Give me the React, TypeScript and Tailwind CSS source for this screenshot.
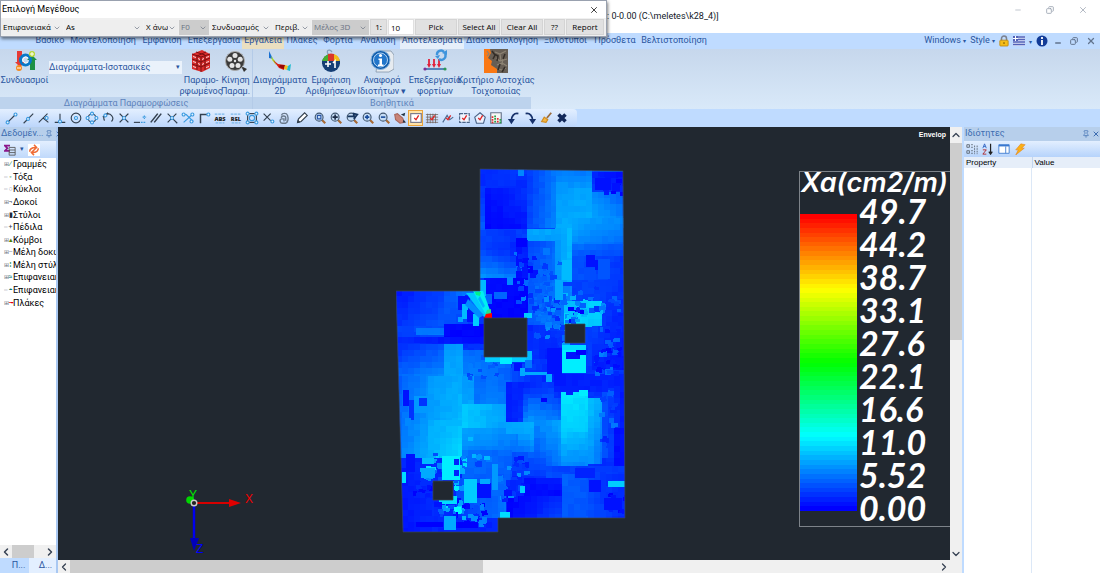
import type { ReactNode } from "react";
import { clsx } from "clsx";
import { ChevronDown, ChevronLeft, ChevronRight, ChevronUp, Copy, Minus, Pin, X } from "lucide-react";

const TABS = [
  { label: "Βασικό", width: "w-9" },
  { label: "Μοντελοποίηση", width: "w-[70px]" },
  { label: "Εμφάνιση", width: "w-12" },
  { label: "Επεξεργασία", width: "w-14" },
  { label: "Εργαλεία", width: "w-[42px]", hot: true },
  { label: "Πλάκες", width: "w-9" },
  { label: "Φορτία", width: "w-9" },
  { label: "Ανάλυση", width: "w-11" },
  { label: "Αποτελέσματα", width: "w-16", active: true },
  { label: "Διαστασιολόγηση", width: "w-[76px]" },
  { label: "Ξυλότυποι", width: "w-[51px]" },
  { label: "Πρόσθετα", width: "w-12" },
  { label: "Βελτιστοποίηση", width: "w-[70px]" },
];

const TREE = [
  { label: "Γραμμές", mark: "∕", color: "text-green-700", open: true },
  { label: "Τόξα", mark: "◦", color: "text-green-700" },
  { label: "Κύκλοι", mark: "○", color: "text-gray-400" },
  { label: "Δοκοί", mark: "¬", color: "text-gray-700", open: true },
  { label: "Στύλοι", mark: "▮", color: "text-gray-800", open: true },
  { label: "Πέδιλα", mark: "+", color: "text-gray-700" },
  { label: "Κόμβοι", mark: "▴", color: "text-lime-700", open: true },
  { label: "Μέλη δοκών", mark: "–", color: "text-gray-400", open: true },
  { label: "Μέλη στύλων", mark: "⁞", color: "text-green-700", open: true },
  { label: "Επιφανειακά", mark: "≈", color: "text-teal-700", open: true },
  { label: "Επιφανειακά", mark: "◓", color: "text-teal-700" },
  { label: "Πλάκες", mark: "╼", color: "text-red-600", open: true },
];

const LEGEND = ["49.7", "44.2", "38.7", "33.1", "27.6", "22.1", "16.6", "11.0", "5.52", "0.00"];
const BANDS = 64;

// Shaded areas of the slab: x, y, width, height, then the level at the
// top-left, top-right, bottom-left and bottom-right corner.
const AREAS = [
  [0, 0, 232, 366, 3, 5, 2, 2],
  [84, 0, 47, 20, 2, 4, 3, 2], [84, 6, 5, 56, 2, 2, 6, 5], [89, 20, 42, 41, 1, 3, 0, 1],
  [131, 2, 29, 58, 3, 7, 4, 8], [160, 2, 36, 18, 7, 7, 9, 9], [160, 20, 36, 41, 9, 10, 10, 10],
  [196, 4, 34, 20, 2, 0, 4, 2], [196, 24, 34, 36, 8, 5, 10, 8], [176, 50, 54, 28, 10, 8, 8, 6],
  [176, 76, 54, 12, 7, 5, 5, 4], [131, 61, 28, 12, 10, 10, 9, 9], [159, 60, 17, 54, 9, 11, 8, 11],
  [176, 88, 54, 24, 5, 3, 5, 3], [84, 62, 36, 20, 4, 3, 4, 2], [84, 82, 36, 28, 4, 2, 9, 7],
  [120, 72, 12, 40, 1, 2, 0, 2], [132, 73, 27, 52, 4, 6, 5, 7], [88, 110, 44, 40, 1, 0, 0, 0],
  [132, 118, 44, 40, 5, 8, 5, 7], [204, 112, 26, 58, 4, 3, 3, 1], [168, 133, 38, 26, 10, 13, 14, 11],
  [131, 157, 39, 34, 2, 4, 3, 1], [196, 158, 34, 44, 4, 2, 2, 1],
  [0, 122, 48, 36, 1, 4, 3, 5], [48, 122, 36, 36, 5, 8, 5, 3], [0, 158, 48, 16, 4, 5, 3, 4],
  [20, 160, 28, 7, 7, 7, 7, 7], [48, 156, 40, 13, 1, 0, 0, 0], [0, 169, 88, 7, 2, 0, 3, 1],
  [0, 176, 48, 32, 2, 5, 6, 8], [48, 176, 19, 32, 9, 9, 10, 10], [67, 182, 48, 28, 6, 7, 8, 6],
  [0, 208, 32, 82, 5, 8, 7, 10], [32, 208, 34, 44, 9, 10, 9, 11], [32, 252, 34, 38, 10, 11, 10, 13],
  [66, 208, 12, 45, 9, 9, 10, 10], [78, 208, 12, 30, 6, 6, 7, 7], [90, 200, 26, 40, 7, 5, 8, 7],
  [66, 236, 50, 24, 12, 9, 12, 9], [66, 260, 60, 34, 10, 8, 7, 6], [116, 196, 50, 18, 5, 2, 4, 1],
  [116, 214, 42, 40, 1, 3, 8, 8], [110, 214, 17, 40, 2, 2, 1, 3], [132, 230, 34, 24, 6, 4, 9, 7],
  [110, 254, 30, 12, 10, 10, 10, 10], [122, 266, 18, 18, 9, 10, 6, 8], [138, 252, 28, 50, 8, 10, 4, 7],
  [158, 206, 72, 18, 1, 2, 2, 2], [165, 224, 27, 40, 14, 13, 12, 12], [165, 264, 27, 34, 12, 11, 8, 8],
  [192, 230, 14, 66, 12, 10, 9, 6], [206, 224, 24, 66, 5, 1, 5, 1], [218, 260, 12, 50, 1, 1, 0, 1],
  [114, 284, 36, 28, 5, 6, 2, 3], [150, 298, 80, 14, 4, 3, 5, 3], [166, 306, 26, 44, 6, 5, 5, 5],
  [192, 306, 38, 44, 4, 2, 5, 2], [128, 310, 38, 22, 1, 2, 0, 0], [111, 328, 55, 22, 0, 2, 0, 4],
  [0, 300, 38, 66, 1, 3, 1, 2], [66, 282, 50, 30, 7, 6, 6, 5], [60, 310, 50, 40, 5, 6, 3, 7],
];

// Single mesh pieces: x, y, width, height, level
const PATCHES = [
  [122, 1, 6, 7, 8], [199, 10, 16, 12, 1], [216, 15, 8, 8, 1], [120, 70, 11, 9, 0], [147, 80, 7, 7, 7],
  [190, 87, 9, 12, 1], [199, 92, 4, 10, 1], [202, 91, 12, 20, 5], [166, 92, 10, 20, 11], [159, 112, 8, 20, 10],
  [98, 124, 13, 7, 6], [88, 126, 8, 10, 6], [111, 109, 6, 8, 8], [84, 112, 6, 16, 11], [128, 145, 8, 5, 12],
  [62, 128, 12, 14, 1], [66, 136, 6, 15, 11], [71, 142, 12, 12, 1], [77, 146, 6, 12, 12],
  [89, 189, 42, 5, 12], [104, 189, 12, 7, 14], [130, 183, 6, 11, 11], [118, 195, 8, 8, 1], [124, 200, 5, 8, 10],
  [129, 192, 7, 8, 7], [128, 204, 28, 3, 10], [150, 205, 6, 9, 10], [151, 180, 15, 26, 1],
  [166, 177, 24, 5, 13], [166, 182, 24, 23, 14], [170, 184, 14, 7, 1], [180, 182, 10, 5, 0],
  [18, 228, 14, 17, 9], [23, 230, 8, 8, 3], [7, 222, 6, 16, 1], [13, 232, 5, 20, 3], [9, 250, 6, 8, 8],
  [145, 230, 6, 4, 0], [183, 222, 9, 6, 14], [170, 224, 7, 3, 2],
  [10, 286, 9, 18, 1], [6, 304, 4, 11, 13], [46, 288, 18, 24, 14], [58, 291, 5, 6, 2], [58, 302, 5, 6, 2],
  [26, 290, 12, 6, 11], [25, 300, 14, 10, 10], [68, 311, 13, 24, 12], [81, 315, 14, 15, 1], [84, 311, 10, 5, 10],
  [96, 296, 6, 26, 9], [104, 344, 10, 6, 13], [108, 322, 8, 6, 1], [124, 318, 5, 7, 12], [212, 313, 18, 6, 12],
  [193, 312, 12, 12, 1], [179, 300, 20, 10, 2], [43, 328, 18, 8, 13], [38, 334, 8, 5, 1], [48, 348, 12, 14, 10],
  [20, 354, 27, 5, 0], [62, 354, 20, 6, 0], [208, 330, 18, 12, 1], [72, 269, 5, 4, 11], [88, 288, 6, 4, 11],
];

// Irregular regions: x, y, width, height, base level, spread, number of pieces
const BROKEN = [
  [118, 82, 22, 46, 3, 4, 20], [136, 90, 30, 50, 5, 2, 26], [120, 125, 40, 24, 6, 4, 22],
  [156, 118, 50, 24, 7, 5, 26], [138, 146, 34, 22, 6, 3, 20], [196, 158, 26, 46, 4, 4, 34],
  [160, 172, 10, 12, 8, 6, 8], [170, 138, 16, 14, 5, 7, 16], [206, 128, 16, 18, 4, 2, 8],
  [22, 284, 24, 26, 9, 5, 16], [56, 288, 14, 34, 10, 5, 14], [14, 310, 26, 16, 1, 2, 12],
  [54, 330, 32, 26, 4, 7, 34], [40, 334, 22, 12, 9, 6, 12], [100, 284, 30, 46, 5, 4, 22],
  [202, 8, 24, 16, 1, 2, 10], [208, 324, 22, 24, 1, 2, 12], [70, 184, 30, 26, 6, 2, 14],
  [70, 284, 22, 10, 7, 4, 8], [200, 218, 18, 60, 5, 3, 14], [60, 126, 14, 24, 6, 5, 8],
];

const blue = (level: number) => {
  const g = Math.round(Math.max(0, Math.min(15, level)) * 17);
  return `rgb(0,${g},255)`;
};

const hash = (a: number, b: number) => {
  const v = Math.sin(a * 127.1 + b * 311.7) * 43758.5453;
  return v - Math.floor(v);
};

function Mesh() {
  const cells: ReactNode[] = [];
  AREAS.forEach(([x, y, w, h, tl, tr, bl, br], n) => {
    for (let dx = 0; dx < w; dx += 6) {
      for (let dy = 0; dy < h; dy += 6) {
        const u = Math.min(1, (dx + 3) / w);
        const v = Math.min(1, (dy + 3) / h);
        const level = (tl * (1 - u) + tr * u) * (1 - v) + (bl * (1 - u) + br * u) * v;
        cells.push(
          <rect
            key={`a${n}-${dx}-${dy}`}
            x={x + dx}
            y={y + dy}
            width={Math.min(6, w - dx)}
            height={Math.min(6, h - dy)}
            fill={blue(level + (hash(x + dx, y + dy) - 0.5) * 0.7)}
          />,
        );
      }
    }
  });
  BROKEN.forEach(([x, y, w, h, base, spread, count], n) => {
    for (let k = 0; k < count; k++) {
      const px = x + hash(n, k) * w;
      const py = y + hash(n + 40, k) * h;
      const level = base + (hash(n + 80, k) * 2 - 1) * spread;
      cells.push(
        <rect
          key={`b${n}-${k}`}
          x={px}
          y={py}
          width={3 + hash(k, n) * 4}
          height={3 + hash(k, n + 9) * 3}
          fill={blue(level)}
          transform={`rotate(${hash(k, n + 3) * 24 - 12} ${px} ${py})`}
        />,
      );
    }
  });
  PATCHES.forEach(([x, y, w, h, level], n) => {
    cells.push(<rect key={`p${n}`} x={x} y={y} width={w} height={h} fill={blue(level)} />);
  });
  return (
    <svg viewBox="0 0 232 366" className="absolute left-[338px] top-[41px] h-[366px] w-[232px]" role="img" aria-label="Xa">
      <clipPath id="slab">
        <path d="M84 1 227 3 229 350H102V364H7L0 123H84Z" />
      </clipPath>
      <g clipPath="url(#slab)">
        <g shapeRendering="crispEdges">{cells}</g>
        <path d="M70 125h12l12 22-6 2z" fill="#00c8ff" />
        <path d="M77 123h10l8 22-5 2z" fill="#00f0f0" />
        <path d="m72 131 16 16-5 3-14-13z" fill="#008cff" />
        <path d="M79 124h6l-1 4-4-1z" fill="#00f08c" />
        <path d="m84 128 5 10-2 2-5-9z" fill="#00b4ff" />
        <path d="m91 142 4-1v6h-6z" fill="#20e08c" />
        <path d="m88 150 2-4 6-1v5z" fill="#f00" />
      </g>
      <g fill="#212830" stroke="#3a4654" strokeWidth=".7">
        <path d="M88 150h43v39H88zM169 156h20v19h-20zM37 313h20v19H37z" />
        <path d="M84 1 227 3 229 350H102V364H7L0 123H84Z" fill="none" />
      </g>
    </svg>
  );
}

function Axes() {
  return (
    <svg viewBox="0 0 80 70" className="absolute left-[126px] top-[359px] h-[70px] w-20">
      <path d="M11 17h36" stroke="#d60000" strokeWidth="2" />
      <path d="m45 13 12 4-12 4z" fill="#e00000" />
      <path d="M10 19v38" stroke="#0000f0" strokeWidth="2.4" />
      <path d="m6 52 4 13 5-13z" fill="#0000b8" />
      <circle cx="6" cy="14" r="3.8" fill="#00d600" />
      <circle cx="10" cy="17" r="2.8" fill="#222" stroke="#ccc" strokeWidth="1.4" />
      <g fontFamily="Liberation Sans, sans-serif" fontSize="12">
        <text x="5" y="13" fill="#00e600">Y</text>
        <text x="61" y="17" fill="#f00000">X</text>
        <text x="12" y="67" fill="#0000ff">Z</text>
      </g>
    </svg>
  );
}

function Combo({ label, width, disabled }: { label: string; width: string; disabled?: boolean }) {
  return (
    <div className={clsx("relative h-[15px] shrink-0", width, disabled ? "bg-[#cccccc] text-gray-500" : "bg-[#eeeeee]")}>
      <select disabled={disabled} aria-label={label} className="h-full w-full appearance-none pl-0.5 pr-2.5 opacity-100">
        <option>{label}</option>
      </select>
      <ChevronDown className="pointer-events-none absolute right-0.5 top-1 size-2 text-gray-500" strokeWidth={2} />
    </div>
  );
}

function PushButton({ children, width }: { children: ReactNode; width: string }) {
  return <button className={clsx("h-4 shrink-0 border border-[#d4d4d4] bg-[#e1e1e1] text-center", width)}>{children}</button>;
}

function MagnitudeDialog() {
  return (
    <div className="absolute left-0 top-0 z-10 w-[607px] border border-gray-400 bg-white text-black shadow-[1px_2px_3px_rgba(0,0,0,0.5)]">
      <div className="flex h-[17px] items-center justify-between pl-px pr-[7px]">
        <h2 className="text-[9px]">Επιλογή Μεγέθους</h2>
        <button aria-label="Close"><X className="size-2.5" strokeWidth={1.8} /></button>
      </div>
      <div className="flex h-[18px] items-center gap-px bg-[#f0f0f0] font-['Open_Sans','Noto_Sans',sans-serif] text-[8px] font-medium">
        <Combo label="Επιφανειακά" width="w-[62px]" />
        <Combo label="As" width="w-[79px]" />
        <Combo label="X άνω" width="w-[34px]" />
        <Combo label="F0" width="w-[30px]" disabled />
        <Combo label="Συνδυασμός" width="w-[62px]" />
        <Combo label="Περιβ." width="w-[38px]" />
        <Combo label="Μέλος 3D" width="w-[57px]" disabled />
        <PushButton width="w-[17px]">1:</PushButton>
        <input aria-label="Scale" defaultValue="10" className="h-4 w-[26px] border border-[#e0e0e0] bg-white pl-0.5 leading-3" />
        <PushButton width="w-[42px]">Pick</PushButton>
        <PushButton width="w-[42px]">Select All</PushButton>
        <PushButton width="w-[42px]">Clear All</PushButton>
        <PushButton width="w-[21px]">??</PushButton>
        <PushButton width="w-[38px]">Report</PushButton>
      </div>
    </div>
  );
}

function Large({ lines, width, children }: { lines: string[]; width: string; children: ReactNode }) {
  return (
    <button className={clsx("flex h-12 shrink-0 flex-col items-center whitespace-nowrap text-[9px] leading-[11px]", width)}>
      <svg viewBox="0 0 24 24" className="mb-0.5 size-6 shrink-0">{children}</svg>
      {lines.map((line) => <span key={line}>{line}</span>)}
    </button>
  );
}

function Ribbon() {
  return (
    <div className="flex h-[60px] shrink-0 bg-gradient-to-b from-[#c6d7ec] to-[#d9e9f9] text-[#2a56a0]">
      <section className="flex w-[253px] flex-col border-r border-[#b4cbe8]">
        <div className="flex flex-1 items-start">
          <Large lines={["Συνδυασμοί"]} width="w-[49px]">
            <path d="M4 2h5v11h3l-5 5-5-5h2z" fill="#e63a35" />
            <path d="M17 21h5V11h2l-5-5-5 5h3z" fill="#1d9145" />
            <circle cx="12.5" cy="11" r="5" fill="none" stroke="#0878c8" strokeWidth="3" />
            <path d="M15 9a3 3 0 1 0 0 4" fill="none" stroke="#fff" strokeWidth="1" />
            <circle cx="6" cy="19" r="3" fill="#f68b1f" />
            <path d="M4 19h4" stroke="#fff" />
            <circle cx="19" cy="5" r="3" fill="#b8d832" />
            <path d="M17 5h4M19 3v4" stroke="#fff" />
          </Large>
          <div className="relative mt-3 h-[13px] w-[133px] bg-[#eaf2fb] text-[9px]">
            <select aria-label="Diagram" className="block h-full w-full appearance-none leading-[13px]">
              <option>Διαγράμματα-Ισοτασικές</option>
            </select>
            <span className="pointer-events-none absolute right-0.5 top-px text-[7px]">▾</span>
          </div>
          <Large lines={["Παραμο-", "ρφωμένος"]} width="w-[38px]">
            <path d="m3 5 10-4 8 4v14l-8 4-10-3z" fill="#d92b2b" />
            <path d="m3 5 9 3 9-3M12 8v15M3 10l9 3 9-4M3 15l9 3 9-4M7 3l9 3v15M17 3 8 7v14" fill="none" stroke="#7d1010" strokeWidth="1" />
            <path d="m4 7 3 1v1l-3-1zM9 9l2 1v1l-2-1zM4 12l3 1v1l-3-1zM9 14l2 1v1l-2-1zM4 17l3 1v1l-3-1zM13 10l2-1v1l-2 1zM17 8l3-1v1l-3 1zM13 15l2-1v1l-2 1zM17 13l3-1v1l-3 1zM17 18l3-1v1l-3 1z" fill="#f7d8d8" />
          </Large>
          <Large lines={["Κίνηση", "Παραμ."]} width="w-[31px]">
            <path d="m17 17 6 3-3 3z" fill="#333" />
            <circle cx="11" cy="12" r="9.5" fill="#3b3b3b" stroke="#aaa" />
            <g fill="#e5e5e5">
              <circle cx="11" cy="6.5" r="2.5" /><circle cx="5.8" cy="10.3" r="2.5" /><circle cx="16.2" cy="10.3" r="2.5" />
              <circle cx="8" cy="16.5" r="2.5" /><circle cx="14" cy="16.5" r="2.5" /><circle cx="11" cy="12" r="1.2" />
            </g>
          </Large>
        </div>
        <h3 className="h-3 bg-[#bdd3ed] text-center text-[9px] leading-3 text-[#5d83bc]">Διαγράμματα Παραμορφώσεις</h3>
      </section>
      <section className="flex w-[278px] flex-col">
        <div className="flex flex-1 items-start">
          <Large lines={["Διαγράμματα", "2D"]} width="w-[54px]">
            <path d="m1 2 4 8-4-1z" fill="#176fd1" />
            <path d="m3 7 4 5 1 4-4-5z" fill="#a8d82d" />
            <path d="m5 11 5 4 7 1-1 5-5-2z" fill="#d91c10" />
            <path d="m12 16 5 0-1 4-5-2z" fill="#980805" />
            <path d="m17 16 3 1-1 4-3-1z" fill="#f0c020" />
            <path d="m20 17 3-2-1 7-3-1z" fill="#1fbccf" />
          </Large>
          <Large lines={["Εμφάνιση", "Αριθμήσεων"]} width="w-12">
            <path d="M10 6C6 2 10-1 13 3" fill="none" stroke="#86a0bc" strokeWidth="1.3" />
            <circle cx="12" cy="14" r="9" fill="#153e75" />
            <path d="M12 5a9 9 0 0 0-9 8h9z" fill="#48ae30" />
            <path d="M9 5a9 9 0 0 1 6 0v7H9z" fill="#db3829" />
            <path d="M15 5a9 9 0 0 1 6 8h-6z" fill="#f2bd19" />
            <path d="M3 12h18v3H3z" fill="#153e75" />
            <path d="M6 15h6M9 12v6M14 14l2-2v7" fill="none" stroke="#fff" strokeWidth="1.6" />
          </Large>
          <Large lines={["Αναφορά", "Ιδιοτήτων  ▾"]} width="w-[54px]">
            <path d="M9 2h12l3 4v14l-5 3H6z" fill="#e6ebf0" stroke="#8495a8" strokeWidth=".8" />
            <circle cx="10.500" cy="11" r="9.5" fill="#0f5dad" stroke="#88b3dc" />
            <circle cx="10.500" cy="11" r="7" fill="#2276ca" stroke="#dcedff" strokeWidth=".8" />
            <circle cx="10.500" cy="6.500" r="1.600" fill="#fff" />
            <path d="M8.500 9.500h3.500v6h1.500v1.500H8v-1.500h1.500v-4.500h-1z" fill="#fff" />
          </Large>
          <Large lines={["Επεξεργασία", "φορτίων"]} width="w-[52px]">
            <path d="M1 20h22" stroke="#2f65a8" strokeWidth="1.5" />
            <path d="M6 10v7M11 10v7M16 10v7" stroke="#e2203a" strokeWidth="1.8" />
            <path d="m4 15 2 4 2-4zM9 15l2 4 2-4zM14 15l2 4 2-4z" fill="#e2203a" />
            <circle cx="2" cy="20" r="1.600" fill="#7b2f97" /><circle cx="22" cy="20" r="1.600" fill="#2b9957" />
            <path d="M14 6a4 4 0 0 1 7-3M22 5a4 4 0 0 1-6 5" fill="none" stroke="#3f94dc" strokeWidth="2.4" />
            <path d="m19 4 5-3v5zM12 7l5-1-2 4z" fill="#3f94dc" />
          </Large>
          <Large lines={["Κριτήριο Αστοχίας", "Τοιχοποιίας"]} width="w-[70px]">
            <path d="M0 0h24v24H0z" fill="#675e54" />
            <path d="M0 0h6l1 4-3 5 4 3-1 4 6 4v4H0z" fill="#fa7814" />
            <path d="m3 2 2 3-2 2M11 3l5 2 6-3M12 9l4 3 7-2M13 16l5-2 5 3M15 20l3 1 4-2M16 5l1 7M19 9l-1 7" fill="none" stroke="#8d8373" strokeWidth="1.2" />
            <path d="m10 5 4 2-1 5M16 15l-2 6M21 5l-2 5M21 18l-3 5M8 2l3 4-2 4" fill="none" stroke="#332d27" strokeWidth="1.5" />
          </Large>
        </div>
        <h3 className="h-3 bg-[#bdd3ed] text-center text-[9px] leading-3 text-[#5d83bc]">Βοηθητικά</h3>
      </section>
    </div>
  );
}

const DOT = "#3a9ae0";
const dot = (cx: number, cy: number) => <circle key={`${cx}-${cy}`} cx={cx} cy={cy} r="1.7" fill="#e7f4ff" stroke={DOT} />;
const lens = (inner: ReactNode) => (
  <>
    <path d="m10 10 4 4" stroke="#a86a34" strokeWidth="2.4" />
    <circle cx="7" cy="7" r="4.5" fill="#c5dcf5" stroke="#40566f" strokeWidth="1.3" />
    {inner}
  </>
);
const word = (text: string) => (
  <>
    <text x="8" y="11" textAnchor="middle" fontSize="6.500" fontWeight="900" stroke="none" fill="#222" fontFamily="Noto Sans, sans-serif">{text}</text>
    <path d="M2 3.500h12M3 13.500h10" stroke="#7bb8ea" strokeDasharray="3 1" />
  </>
);
const tick = <path d="m6 8 2 2 3-5" stroke="#e02020" strokeWidth="1.500" />;

const TOOLS: [string, ReactNode][] = [
  ["Endpoint", <><path d="M3 13 12 4" />{dot(3, 13)}{dot(12, 4)}</>],
  ["Midpoint", <><path d="M3 14 14 3" />{dot(8, 9)}</>],
  ["Nearest", <><path d="M2 13 12 3M7 8l6 5" />{dot(11, 8)}</>],
  ["Perpendicular", <><path d="M8 3v10M2 13h12" />{dot(8, 12)}</>],
  ["Center", <><circle cx="8" cy="8" r="5.500" />{dot(8, 8)}</>],
  ["Quadrant", <><circle cx="8" cy="8" r="4.500" />{[dot(8, 3), dot(8, 13), dot(3, 8), dot(13, 8)]}</>],
  ["Tangent", <><path d="M4 11A5 5 0 1 1 12 12M2 7l6-5" />{dot(5, 5)}</>],
  ["Intersection", <><path d="m3 3 10 10M13 3 3 13" strokeWidth="1.600" />{dot(8, 8)}</>],
  ["Extension", <><path d="M1 13h7" /><path d="M9 13h5M11 7h4M13 5v4" stroke={DOT} strokeDasharray="2 1" /></>],
  ["Parallel", <path d="M2 13 10 3M6 13l8-10" strokeWidth="1.800" />],
  ["Apparent intersection", <><path d="m3 3 4 4M9 9l5 5M13 3 3 13" />{dot(8, 8)}</>],
  ["Clear snaps", <><path d="M2 4h4l8 8M3 13 13 4" stroke={DOT} />{[dot(3, 4), dot(13, 4), dot(12, 12)]}</>],
  ["Ortho", <><path d="M4 14V4h8" strokeWidth="1.700" />{dot(13, 4)}</>],
  ["Absolute", word("ABS")],
  ["Relative", word("REL")],
  ["Node", <><rect x="3" y="3" width="10" height="10" /><circle cx="8" cy="8" r="3" stroke={DOT} />{[dot(3, 3), dot(13, 3), dot(3, 13), dot(13, 13)]}</>],
  ["No snap", <><path d="m3 3 8 8M11 3l-8 8" />{dot(13, 12)}</>],
  ["Lock", <path d="M5 14h5c3-2 3-6 2-9-1-3-6-3-7 0M5 8c0-3 5-3 5 0v3M5 14c-2-2-2-4 0-5h3v3" stroke="#6a7a8c" strokeWidth="1.600" />],
  ["Edit", <><path d="m3 13 1-4 7-7 3 3-7 7z" fill="#fff" /><path d="m3 13 2-.5-1.500-1.500z" fill="#222" /></>],
  ["Zoom window", lens(<path d="M5 5h4v4H5z" stroke="#2855a5" />)],
  ["Zoom extents", lens(<path d="M4 7h6M7 4v6" stroke="#1b2a44" strokeWidth="1.800" />)],
  ["Zoom previous", lens(<path d="M3 6h7V3l4 1-4 5" stroke="#17355f" strokeWidth="2" />)],
  ["Zoom in", lens(<path d="M4.500 7h5M7 4.500v5" stroke="#184b9c" strokeWidth="1.800" />)],
  ["Zoom out", lens(<path d="M4.500 7h5" stroke="#184b9c" strokeWidth="1.800" />)],
  ["Pan", <><path d="m2 4 3-1 6 5 2 5-5 1-5-4z" fill="#c98478" stroke="#a7675d" /><path d="M9 4l5-2-1 4zM12 10l3 3h-4z" fill="#234" stroke="none" /></>],
  ["Select", <><rect x="2" y="3" width="12" height="10" fill="#fff" stroke="#778" />{tick}</>],
  ["Select mesh", <><path d="M1 4h14M1 7h14M1 10h14M1 13h14M3 3v11M6 3v11M9 3v11M12 3v11" stroke="#6c5a51" strokeWidth=".8" />{tick}</>],
  ["Select polyline", <><path d="m2 13 5-8 3 5 4-3" stroke="#4d6a90" />{tick}</>],
  ["Select window", <><path d="M3 3h11v10H3z" fill="#f1f6ff" stroke="#4b6488" strokeDasharray="4 1" />{tick}</>],
  ["Select polygon", <><path d="m8 2 6 5-2 7H4L2 7z" fill="#e9f1ff" stroke="#4b6488" />{tick}</>],
  ["Filter", <><path d="M2 2h12v12H2z" fill="#f7f7f7" stroke="#66758c" /><path d="M4 6v8M10 8v6" stroke="#e03030" strokeWidth="2" strokeDasharray="2 1" /><path d="M7 5v9M13 9v5" stroke="#21a34a" strokeWidth="2" strokeDasharray="2 1" /></>],
  ["Undo", <><path d="M13 3C8 2 5 6 5 11" stroke="#17316b" strokeWidth="2" /><path d="m1 9 4 6 4-6z" fill="#17316b" stroke="none" /></>],
  ["Redo", <><path d="M3 3c5-1 8 3 8 8" stroke="#17316b" strokeWidth="2" /><path d="m7 9 4 6 4-6z" fill="#17316b" stroke="none" /></>],
  ["Clean", <><path d="m14 2-5 6" stroke="#9b6c3c" strokeWidth="2" /><path d="m6 7 4 3-2 3-5-1z" fill="#f5b641" stroke="#cf8b1f" /></>],
  ["Delete", <path d="m4 4 8 8M12 4l-8 8" stroke="#12285a" strokeWidth="4" />],
];

function SnapBar() {
  return (
    <div className="flex h-[18px] shrink-0 items-center bg-[#bfdbff]">
      <div className="flex h-full items-center rounded-r bg-gradient-to-b from-[#e3efff] to-[#bcd6fb] pl-1 pr-2">
        {TOOLS.map(([name, art]) => (
          <button
            key={name}
            aria-label={name}
            className={clsx(
              "flex h-4 w-[15px] items-center justify-center border",
              name === "Select" ? "border-[#e8a33d] bg-[#ffe3a8]" : "border-transparent",
              (name === "Edit" || name === "Zoom window" || name === "Undo") && "ml-0.5",
              name !== "Delete" && "mr-px",
            )}
          >
            <svg viewBox="0 0 16 16" className="size-[14px] shrink-0" fill="none" stroke="#33404f" strokeWidth="1.300">{art}</svg>
          </button>
        ))}
      </div>
    </div>
  );
}

function PaneTitle({ children }: { children: ReactNode }) {
  return (
    <div className="flex h-[14px] shrink-0 items-center gap-0.5 bg-[#b7cfeb] pl-px text-[9px] text-[#3c6cb0]">
      <h2 className="flex-1 whitespace-nowrap">{children}</h2>
      <Pin className="size-2 shrink-0" />
      <X className="size-2 shrink-0" strokeWidth={3} />
    </div>
  );
}

function DataPane() {
  return (
    <aside className="flex w-[58px] shrink-0 flex-col border-r-2 border-[#a9c8f2] bg-[#bfdbff]">
      <PaneTitle>Δεδομέν...</PaneTitle>
      <div className="flex h-[17px] shrink-0 items-center gap-1 bg-gradient-to-b from-[#e3efff] to-[#c0d9fb] pl-1">
        <svg viewBox="0 0 14 14" className="size-3" fill="none">
          <path d="M7 2H1l3 3-3 3h6" stroke="#8b168b" strokeWidth="2" />
          <path d="M6 4h7v9H6zM6 7h7M6 10h7" stroke="#555" />
        </svg>
        <span className="text-[7px] text-[#2a56a0]">▾</span>
        <svg viewBox="0 0 14 14" className="size-3 bg-white" fill="none" stroke="#ef6c35" strokeWidth="1.800">
          <path d="M2 9c0-4 3-5 7-5M12 5c0 4-3 5-7 5M7 1l3 3-3 3M7 13l-3-3 3-3" />
        </svg>
      </div>
      <div className="min-h-0 flex-1 overflow-hidden bg-white">
        <ul className="ml-1 flex h-[151px] flex-col text-[9px] leading-3 text-black">
          {TREE.map((item, n) => (
            <li key={n} className="flex min-h-0 flex-1 items-center whitespace-nowrap">
              <span className="flex w-1 shrink-0 justify-center text-[6px] text-gray-500">{item.open ? "⊞" : "┄"}</span>
              <span className={clsx("w-[5px] shrink-0 text-center text-[7px]", item.color)}>{item.mark}</span>
              <span>{item.label}</span>
            </li>
          ))}
        </ul>
      </div>
      <div className="flex h-[13px] shrink-0 items-center bg-[#f0f0f0] text-gray-700">
        <ChevronLeft className="size-3" strokeWidth={3} />
        <div className="h-full w-[22px] bg-[#cdcdcd]" />
        <ChevronRight className="ml-auto size-3" strokeWidth={3} />
      </div>
      <div className="flex h-[15px] shrink-0 text-[9px] text-[#2a56a0]">
        <button className="flex-1 pl-2">Π...</button>
        <button className="flex-1 bg-[#e3efff] pl-1.5">Δ...</button>
      </div>
    </aside>
  );
}

function Legend() {
  return (
    <div className="absolute right-0 top-11 h-[356px] w-[151px] overflow-hidden border border-r-0 border-[#7d8389] font-bold italic text-white">
      <div className="h-[22px] whitespace-nowrap pl-px font-['Inter','Open_Sans',sans-serif] text-[27px] font-semibold leading-[22px]">Xa(cm2/m)</div>
      <div className="flex">
        <div className="mt-5 flex h-[297px] w-[57px] flex-col">
          {Array.from({ length: BANDS }, (_, n) => (
            <div key={n} className="flex-1" style={{ backgroundColor: `hsl(${(n * 240) / (BANDS - 1)} 100% 50%)` }} />
          ))}
        </div>
        <ol className="pl-0.5 font-['Lato','Open_Sans',sans-serif] text-[34px] leading-[33px]">
          {LEGEND.map((value) => <li key={value}>{value}</li>)}
        </ol>
      </div>
    </div>
  );
}

function Viewport() {
  return (
    <main className="flex min-w-0 flex-1 flex-col">
      <div className="flex min-h-0 flex-1">
        <div className="relative min-w-0 flex-1 overflow-hidden bg-[#212830]">
          <span className="absolute right-1 top-0.5 font-['Liberation_Sans',sans-serif] text-[7px] leading-3 font-bold text-white">Envelop</span>
          <Mesh />
          <Axes />
          <Legend />
        </div>
        <div className="flex w-3 shrink-0 flex-col items-center bg-[#f0f0f0] text-gray-700">
          <ChevronUp className="my-0.5 size-3 shrink-0" strokeWidth={2.5} />
          <div className="h-[197px] w-full bg-[#cdcdcd]" />
          <ChevronDown className="mt-auto size-3 shrink-0" strokeWidth={2.5} />
        </div>
      </div>
      <div className="flex h-[13px] shrink-0 items-center bg-[#f0f0f0] pr-3 text-gray-700">
        <ChevronLeft className="size-3" strokeWidth={2.5} />
        <div className="h-full w-[413px] bg-[#cdcdcd]" />
        <ChevronRight className="ml-auto size-3" strokeWidth={2.5} />
      </div>
    </main>
  );
}

function PropertiesPane() {
  return (
    <aside className="flex w-[138px] shrink-0 flex-col border-l-2 border-[#bfdbff] bg-white">
      <PaneTitle>Ιδιότητες</PaneTitle>
      <div className="flex h-4 shrink-0 items-center gap-1 bg-gradient-to-b from-[#e3efff] to-[#b6d3fb] pl-0.5">
        <svg viewBox="0 0 14 14" className="size-3" fill="none" stroke="#59636e">
          <path d="M1 2h3v3H1zM1 9h3v3H1zM6 2h2M6 5h2M6 9h2M6 12h2" /><path d="M10 3v10M13 3v10" strokeDasharray="2 1" />
        </svg>
        <svg viewBox="0 0 14 14" className="size-3" fill="none">
          <path d="m1 6 2-5 2 5M2 4h2" stroke="#295fc0" /><path d="M1 8h4l-4 5h4" stroke="#b02020" /><path d="M10 1v11M8 10l2 3 2-3" stroke="#222" strokeWidth="1.400" />
        </svg>
        <svg viewBox="0 0 14 14" className="size-3" fill="#fff" stroke="#3978cf">
          <path d="M1 2h12v10H1zM9 4v8" /><path d="M1 3h12" strokeWidth="2" />
        </svg>
        <svg viewBox="0 0 14 14" className="size-3"><path d="m8 1 5 1-4 4h3L2 14l3-6H2z" fill="#fbb116" stroke="#e37a12" strokeWidth=".6" /></svg>
      </div>
      <table className="w-full table-fixed font-['Liberation_Sans',sans-serif] text-[8px] text-black">
        <thead>
          <tr className="h-[11px] bg-[#e6eef9] text-left leading-[11px]">
            <th className="border-r border-[#c3d5ed] pl-0.5 font-normal">Property</th>
            <th className="pl-0.5 font-normal">Value</th>
          </tr>
        </thead>
      </table>
      <div className="w-1/2 flex-1 border-r border-[#dce8f7]" />
    </aside>
  );
}

export default function App() {
  return (
    <div className="relative flex h-screen min-h-[480px] flex-col overflow-hidden bg-white font-['Roboto','Noto_Sans',sans-serif]">
      <header className="flex h-[33px] shrink-0 justify-between pl-[607px]">
        <h1 className="pt-2.5 text-[9px] text-gray-900">: 0-0.00 (C:\meletes\k28_4)]</h1>
        <div className="flex h-5 items-center gap-6 pr-3 text-gray-400">
          <button aria-label="Minimize"><Minus className="size-2" strokeWidth={1.8} /></button>
          <button aria-label="Restore"><Copy className="size-2 -scale-x-100" strokeWidth={2.5} /></button>
          <button aria-label="Close window"><X className="size-2.5" strokeWidth={1.8} /></button>
        </div>
      </header>
      <nav className="flex h-4 shrink-0 items-stretch bg-[#bfdbff] pl-8 text-[9px] text-[#2a56a0]">
        {TABS.map((tab) => (
          <button
            key={tab.label}
            className={clsx(
              "flex shrink-0 items-center justify-center whitespace-nowrap",
              tab.width,
              tab.active && "bg-[#e6effa]",
              tab.hot && "bg-[#eadfc0]",
            )}
          >
            {tab.label}
          </button>
        ))}
        <div className="ml-auto flex items-center gap-1 pr-1">
          <button>Windows <span className="text-[6px]">▾</span></button>
          <button>Style <span className="text-[6px]">▾</span></button>
          <svg viewBox="0 0 12 14" className="h-3 w-2.5">
            <path d="M3 7V4a3 3 0 0 1 6 0v3" fill="none" stroke="#7b8290" strokeWidth="1.800" />
            <rect x="1" y="6" width="10" height="7" rx="1" fill="#f6bd17" stroke="#bd8710" /><circle cx="6" cy="9.500" r="1" fill="#765100" />
          </svg>
          <svg viewBox="0 0 12 10" className="h-2.5 w-3">
            <path d="M0 0h12v10H0z" fill="#e3e9fa" /><path d="M0 1h12M0 3.500h12M0 6h12M0 8.500h12" stroke="#5262b8" strokeWidth="1.300" />
            <path d="M0 0h5v5H0z" fill="#5262b8" /><path d="M2.500 0v5M0 2.500h5" stroke="#fff" />
          </svg>
          <span className="text-[6px]">▾</span>
          <svg viewBox="0 0 12 12" className="size-3"><circle cx="6" cy="6" r="5.500" fill="#123b97" /><path d="M6 2v2M6 5v5" stroke="#fff" strokeWidth="1.800" /></svg>
          <Minus className="mx-0.5 mt-1 size-2 text-slate-500" strokeWidth={4} />
          <Copy className="mx-0.5 size-2 -scale-x-100 text-slate-500" strokeWidth={3} />
          <X className="ml-0.5 size-2.5 text-slate-500" strokeWidth={3} />
        </div>
      </nav>
      <Ribbon />
      <SnapBar />
      <div className="flex min-h-0 flex-1">
        <DataPane />
        <Viewport />
        <PropertiesPane />
      </div>
      <MagnitudeDialog />
    </div>
  );
}
